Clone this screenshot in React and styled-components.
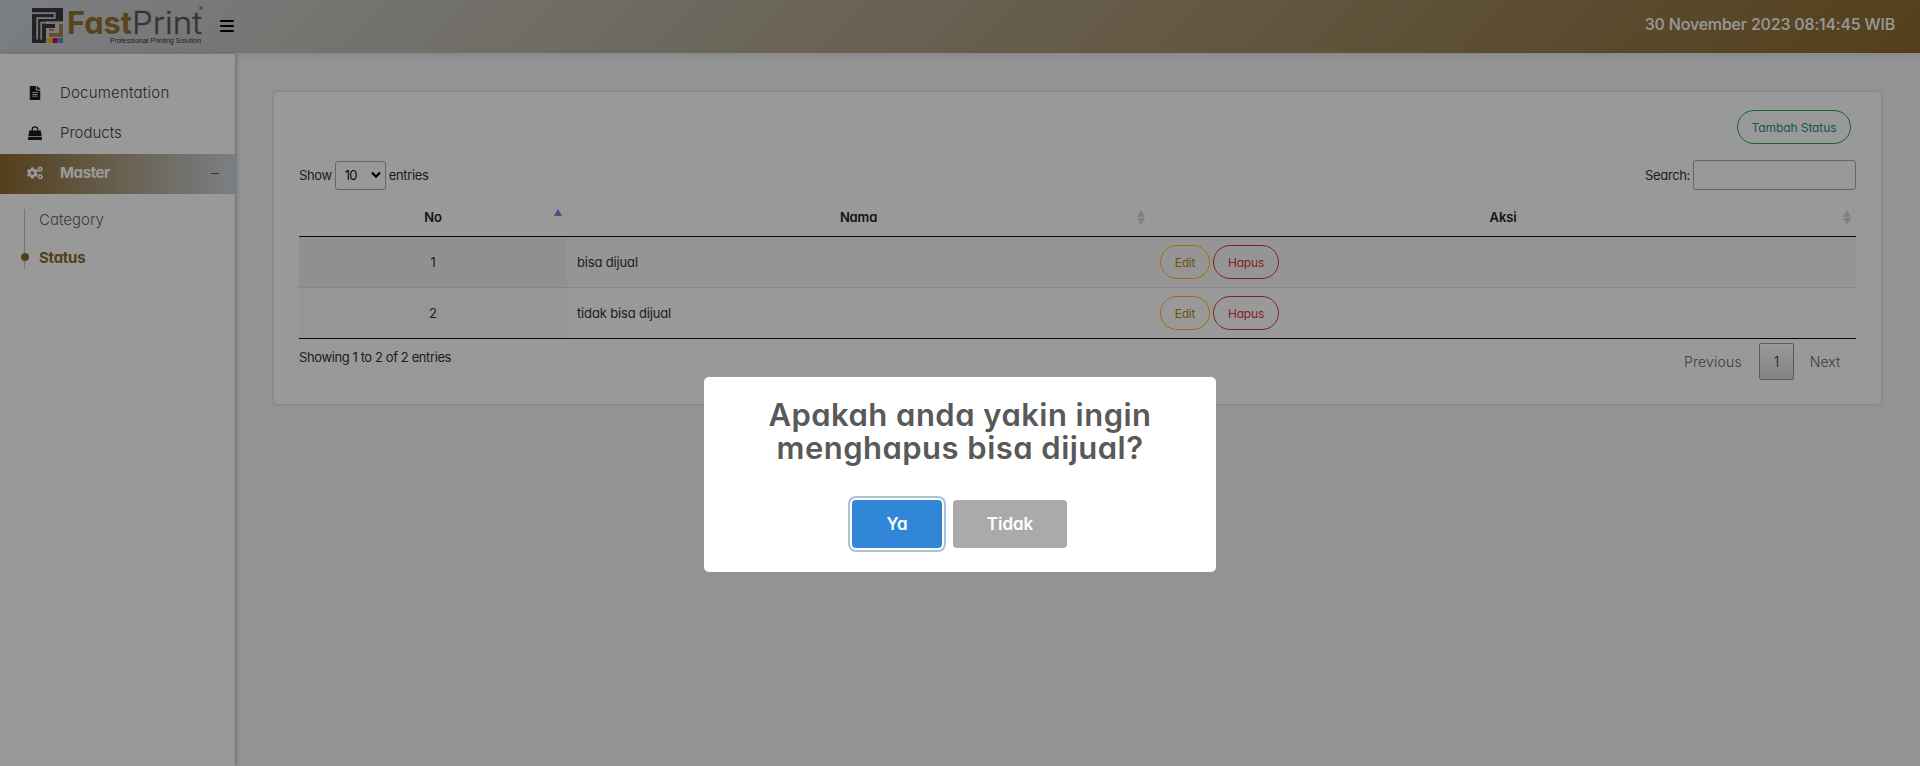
import React from "react";
import styled, { createGlobalStyle, css } from "styled-components";
import { FaFileAlt, FaCogs } from "react-icons/fa";

const GlobalStyle = createGlobalStyle`
  *, *::before, *::after { box-sizing: border-box; }
  body {
    margin: 0;
    background: #f5f5f8;
    font-family: Inter, "Liberation Sans", sans-serif;
    font-feature-settings: "cv11";
    font-size: 13px;
    color: #333;
    overflow: hidden;
  }
`;

const gold = "#8b6a2e";
const silver = "#ced4da";

const Page = styled.div`
  height: 766px;
  display: flex;
  flex-direction: column;
`;

const Header = styled.header`
  flex: 0 0 53px;
  display: flex;
  align-items: flex-start;
  padding: 0 25px 0 32px;
  background: linear-gradient(135deg, ${silver}, ${gold});
  box-shadow: 0 1px 6px rgba(60, 60, 80, 0.14);
`;

const Logo = styled.svg`
  display: block;
  width: 174px;
  height: 53px;
`;

const MenuToggle = styled.button`
  display: flex;
  flex-direction: column;
  justify-content: space-between;
  width: 14px;
  height: 12px;
  margin: 20px 0 0 14px;
  padding: 0;
  border: 0;
  background: none;
`;

const ToggleBar = styled.span`
  height: 2px;
  border-radius: 1px;
  background: #000;
`;

const Clock = styled.time`
  margin-left: auto;
  line-height: 49px;
  font-size: 16px;
  font-weight: 500;
  letter-spacing: -0.18px;
  color: #fff;
`;

const Body = styled.div`
  flex: 1;
  display: flex;
`;

const Sidebar = styled.nav`
  flex: 0 0 235px;
  margin-top: 1px;
  padding-top: 20px;
  background: #fff;
  box-shadow: 1px 0 4px rgba(60, 65, 75, 0.4);
`;

const MenuItem = styled.a`
  display: flex;
  align-items: center;
  height: 40px;
  padding: 0 16px 4px 27px;
  font-size: 15px;
  font-weight: ${(p) => (p.$active ? 700 : 300)};
  letter-spacing: ${(p) => p.$spacing || 0}px;
  color: ${(p) => (p.$active ? "#fff" : "#444")};
  ${(p) => p.$active && css`background: linear-gradient(90deg, ${gold}, ${silver});`}
`;

const MenuIcon = styled.span`
  display: flex;
  justify-content: center;
  width: 16px;
  margin-right: 17px;
  padding-top: 2px;
  color: ${(p) => (p.$active ? "#fff" : "#1c1c22")};
`;

const Collapse = styled.span`
  width: 8px;
  height: 1px;
  margin: 3px 0 0 auto;
  background: #555;
`;

const SubMenu = styled.div`
  margin: 15px 0 0 24px;
  border-left: 1px solid #c4c4c4;
  height: 60px;
`;

const SubItem = styled.a`
  display: flex;
  align-items: center;
  height: ${(p) => (p.$active ? 54 : 21)}px;
  font-size: 15px;
  font-weight: ${(p) => (p.$active ? 700 : 300)};
  letter-spacing: ${(p) => p.$spacing}px;
  color: ${(p) => (p.$active ? gold : "#666")};
  padding-left: ${(p) => (p.$active ? 0 : 14)}px;
`;

const Dot = styled.span`
  width: 8px;
  height: 8px;
  margin: 0 10px 0 -4px;
  border-radius: 50%;
  background: ${gold};
`;

const Main = styled.main`
  flex: 1;
  padding: 37px 37px 0;
`;

const Card = styled.section`
  height: 316px;
  padding: 18px 25px 0;
  border: 2px solid #e8e8ec;
  border-radius: 6px;
  background: #fff;
`;

const Actions = styled.div`
  display: flex;
  justify-content: flex-end;
  padding-right: 5px;
`;

const tones = {
  green: ["#28a745", "#16958a"],
  yellow: ["#ffc107", "#b88a14"],
  red: ["#dc3545", "#dc3545"],
};

const PillButton = styled.button`
  width: ${(p) => p.$width}px;
  height: 34px;
  padding: 0;
  border: 1px solid ${(p) => tones[p.$tone][0]};
  border-radius: 17px;
  background: transparent;
  font: inherit;
  font-feature-settings: inherit;
  font-size: 12px;
  letter-spacing: ${(p) => p.$spacing || 0}px;
  color: ${(p) => tones[p.$tone][1]};
`;

const Controls = styled.div`
  display: flex;
  justify-content: space-between;
  align-items: flex-start;
  height: 36px;
  margin-top: 16px;
`;

const ControlLabel = styled.label`
  display: flex;
  align-items: center;
  gap: 3px;
  height: 30px;
  letter-spacing: -0.36px;
`;

const LengthSelect = styled.span`
  display: flex;
  align-items: center;
  justify-content: space-between;
  width: 51px;
  height: 29px;
  padding: 0 4px 0 9px;
  border: 1px solid #aaa;
  border-radius: 3px;
  letter-spacing: -0.8px;
  color: #111;
`;

const SearchInput = styled.input`
  width: 163px;
  height: 30px;
  border: 1px solid #aaa;
  border-radius: 3px;
  background: transparent;
`;

const Table = styled.table`
  width: 1557px;
  table-layout: fixed;
  border-collapse: separate;
  border-spacing: 0;
  border-bottom: 1px solid #111;
`;

const HeadCell = styled.th`
  width: ${(p) => p.$width}px;
  height: 41px;
  padding: 2px 4px 0 0;
  border-bottom: 1px solid #111;
  font-weight: 600;
  letter-spacing: -0.15px;
  color: #222;
`;

const HeadContent = styled.div`
  display: flex;
  align-items: center;
`;

const HeadText = styled.span`
  flex: 1;
  padding-left: 14px;
`;

const SortMark = styled.span`
  padding-bottom: ${(p) => (p.$active ? 1 : 0)}px;
`;

const SortIcon = styled.svg`
  display: block;
  width: 10px;
  height: 15px;
`;

const Cell = styled.td`
  height: ${(p) => (p.$odd ? 51 : 50)}px;
  padding: 0 10px;
  border-bottom: ${(p) => (p.$odd ? "1px solid #dedede" : "0")};
  text-align: ${(p) => (p.$sorted ? "center" : "left")};
  letter-spacing: -0.16px;
  background: ${(p) => (p.$odd ? (p.$sorted ? "#f1f1f1" : "#f9f9f9") : p.$sorted ? "#fafafa" : "#fff")};
`;

const ButtonGroup = styled.div`
  display: flex;
  gap: 3px;
`;

const TableFooter = styled.div`
  display: flex;
  justify-content: space-between;
  align-items: flex-start;
`;

const Info = styled.div`
  line-height: 37px;
  letter-spacing: -0.4px;
`;

const Pagination = styled.div`
  display: flex;
  margin-top: 4px;
`;

const PageButton = styled.a`
  display: flex;
  align-items: center;
  justify-content: center;
  width: ${(p) => p.$width}px;
  height: 37px;
  padding-bottom: 1px;
  font-size: 14px;
  font-weight: 350;
  letter-spacing: ${(p) => p.$spacing || 0}px;
  color: ${(p) => (p.$current ? "#333" : "#666")};
  border-radius: 2px;
  ${(p) => p.$current && css`
    border: 1px solid #979797;
    background: linear-gradient(#fff, #dcdcdc);
  `}
`;

const Overlay = styled.div`
  position: fixed;
  inset: 0;
  display: flex;
  align-items: flex-start;
  justify-content: center;
  padding-top: 377px;
  background: rgba(0, 0, 0, 0.4);
`;

const Dialog = styled.div`
  width: 512px;
  height: 195px;
  padding-top: 21px;
  border-radius: 5px;
  background: #fff;
  text-align: center;
`;

const DialogTitle = styled.h2`
  height: 68px;
  margin: 0 0 34px;
  font-size: 31px;
  font-weight: 600;
  line-height: 33px;
  letter-spacing: 0.47px;
  color: #595959;
`;

const DialogActions = styled.div`
  display: flex;
  justify-content: center;
  gap: 11px;
  padding-right: 1px;
`;

const DialogButton = styled.button`
  width: ${(p) => p.$width}px;
  height: 48px;
  padding: 0;
  border: 0;
  border-radius: 4px;
  background: ${(p) => (p.$primary ? "#3085d6" : "#aaa")};
  box-shadow: ${(p) => (p.$primary ? "0 0 0 2px #fff, 0 0 0 4px #a9c1d9" : "none")};
  font: inherit;
  font-feature-settings: inherit;
  font-size: 17px;
  font-weight: 600;
  color: #fff;
`;

const FastPrintLogo = () => (
  <Logo viewBox="32 0 174 53">
    <path d="M32 8H63V21.5H46V43H32Z" fill="#3a3a3c" />
    <path d="M32 13.1H54.7V18.2H37.2V39.5M41.3 39.5V22.6H63" fill="none" stroke="#c6ccd1" strokeWidth="1.8" />
    <path d="M42.2 24H55V28H46V38H42.2Z" fill="#3a3a3c" />
    <path d="M59 24H63V37H49V33H59ZM49 29H54V31H49Z" fill="#a5834b" />
    <path d="M47 38H52V43H47Z" fill="#f5b800" />
    <path d="M52.6 38H57.6V43H52.6Z" fill="#d4007a" />
    <path d="M58 38H63V43H58Z" fill="#3a9bd0" />
    <text x="67" y="34" fontSize="31" fontWeight="700" fill="#93702c" textLength="65" lengthAdjust="spacingAndGlyphs">Fast</text>
    <text x="132" y="34" fontSize="31" fontWeight="300" fill="#58585a" stroke="#58585a" strokeWidth="0.3" textLength="70" lengthAdjust="spacingAndGlyphs">Print</text>
    <text x="199" y="11" fontSize="6" fill="#58585a">®</text>
    <text x="110" y="42.8" fontFamily="Liberation Sans, sans-serif" fontSize="7.2" fill="#333" textLength="91" lengthAdjust="spacingAndGlyphs">Professional Printing Solution</text>
  </Logo>
);

const BagIcon = () => (
  <svg width="14" height="14" viewBox="0 0 14 14">
    <path d="M4.2 6V3.6a2.8 2.8 0 0 1 5.6 0V6" fill="none" stroke="currentColor" strokeWidth="1.2" />
    <path d="M1.2 4.6H12.8L13.6 10.2H0.4ZM0.1 11H13.9V14H0.1Z" fill="currentColor" />
  </svg>
);

const Sort = ({ active }) => (
  <SortIcon viewBox="0 0 10 15">
    <path d="M1 7L5 0L9 7Z" fill={active ? "#7d7de0" : "#d6d6d6"} />
    {!active && <path d="M1 8L5 15L9 8Z" fill="#d6d6d6" />}
  </SortIcon>
);

const columns = [
  { name: "No", width: 268, active: true },
  { name: "Nama", width: 583 },
  { name: "Aksi", width: 706 },
];
const rows = [
  { no: 1, name: "bisa dijual" },
  { no: 2, name: "tidak bisa dijual" },
];

export default function App() {
  return (
    <>
      <GlobalStyle />
      <Page>
        <Header>
          <FastPrintLogo />
          <MenuToggle aria-label="Menu"><ToggleBar /><ToggleBar /><ToggleBar /></MenuToggle>
          <Clock>30 November 2023 08:14:45 WIB</Clock>
        </Header>
        <Body>
          <Sidebar>
            <MenuItem $spacing={0.22}><MenuIcon><FaFileAlt size={14} /></MenuIcon>Documentation</MenuItem>
            <MenuItem><MenuIcon><BagIcon /></MenuIcon>Products</MenuItem>
            <MenuItem $active $spacing={-0.4}><MenuIcon $active><FaCogs size={16} /></MenuIcon>Master<Collapse /></MenuItem>
            <SubMenu>
              <SubItem $spacing={0}>Category</SubItem>
              <SubItem $active $spacing={-0.25}><Dot />Status</SubItem>
            </SubMenu>
          </Sidebar>
          <Main>
            <Card>
              <Actions><PillButton $tone="green" $width={114} $spacing={-0.08}>Tambah Status</PillButton></Actions>
              <Controls>
                <ControlLabel>
                  Show
                  <LengthSelect>
                    10
                    <svg width="10" height="8" viewBox="0 0 10 8"><path d="M1 1.5L5 5.7L9 1.5" fill="none" stroke="#000" strokeWidth="2.2" /></svg>
                  </LengthSelect>
                  entries
                </ControlLabel>
                <ControlLabel>Search:<SearchInput /></ControlLabel>
              </Controls>
              <Table>
                <thead>
                  <tr>
                    {columns.map((c) => (
                      <HeadCell key={c.name} $width={c.width}>
                        <HeadContent><HeadText>{c.name}</HeadText><SortMark $active={c.active}><Sort active={c.active} /></SortMark></HeadContent>
                      </HeadCell>
                    ))}
                  </tr>
                </thead>
                <tbody>
                  {rows.map((r) => (
                    <tr key={r.no}>
                      <Cell $sorted $odd={r.no % 2 === 1}>{r.no}</Cell>
                      <Cell $odd={r.no % 2 === 1}>{r.name}</Cell>
                      <Cell $odd={r.no % 2 === 1}>
                        <ButtonGroup>
                          <PillButton $tone="yellow" $width={50} $spacing={-0.25}>Edit</PillButton>
                          <PillButton $tone="red" $width={66} $spacing={-0.2}>Hapus</PillButton>
                        </ButtonGroup>
                      </Cell>
                    </tr>
                  ))}
                </tbody>
              </Table>
              <TableFooter>
                <Info>Showing 1 to 2 of 2 entries</Info>
                <Pagination>
                  <PageButton $width={92} $spacing={0.2}>Previous</PageButton>
                  <PageButton $width={35} $current>1</PageButton>
                  <PageButton $width={62}>Next</PageButton>
                </Pagination>
              </TableFooter>
            </Card>
          </Main>
        </Body>
      </Page>
      <Overlay>
        <Dialog role="dialog">
          <DialogTitle>Apakah anda yakin ingin<br />menghapus bisa dijual?</DialogTitle>
          <DialogActions>
            <DialogButton $primary $width={90}>Ya</DialogButton>
            <DialogButton $width={114}>Tidak</DialogButton>
          </DialogActions>
        </Dialog>
      </Overlay>
    </>
  );
}
